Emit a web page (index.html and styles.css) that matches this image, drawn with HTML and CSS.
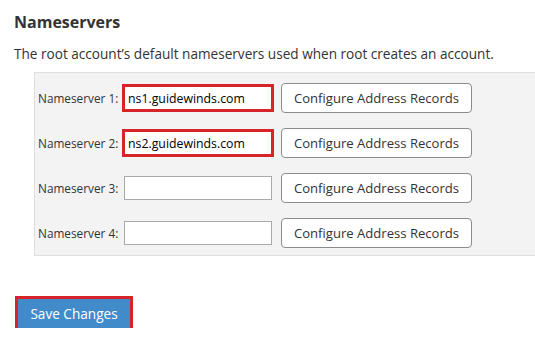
FILE: index.html
```html
<!DOCTYPE html>
<html lang="en">
<head>
    <meta charset="UTF-8">
    <meta name="viewport" content="width=device-width, initial-scale=1.0">
    <title>Nameservers</title>
    <link rel="stylesheet" href="styles.css">
</head>
<body>
    <h2>Nameservers</h2>
    <p class="intro">The root account’s default nameservers used when root creates an account.</p>

    <div class="panel">
        <div class="row">
            <label for="ns1">Nameserver 1:</label>
            <input id="ns1" class="marked" type="text" value="ns1.guidewinds.com">
            <button class="btn">Configure Address Records</button>
        </div>
        <div class="row">
            <label for="ns2">Nameserver 2:</label>
            <input id="ns2" class="marked" type="text" value="ns2.guidewinds.com">
            <button class="btn">Configure Address Records</button>
        </div>
        <div class="row">
            <label for="ns3">Nameserver 3:</label>
            <input id="ns3" type="text" value="">
            <button class="btn">Configure Address Records</button>
        </div>
        <div class="row">
            <label for="ns4">Nameserver 4:</label>
            <input id="ns4" type="text" value="">
            <button class="btn">Configure Address Records</button>
        </div>
    </div>

    <div class="actions">
        <button class="save">Save Changes</button>
    </div>
</body>
</html>
```

FILE: styles.css
```css
html {
    overflow: hidden;
}

body {
    font-family: 'Open Sans', 'Segoe UI', sans-serif;
    color: #333;
    background-color: #fff;
    margin: 0;
    padding: 0 0 0 14px;
}

h2 {
    font-size: 16px;
    font-weight: bold;
    margin: 10px 0 0;
    line-height: 24px;
}

.intro {
    font-size: 13.6px;
    margin: 10px 0 0;
    line-height: 20px;
}

.panel {
    background-color: #f3f3f3;
    border: 1px solid #dedede;
    margin: 8px -4px 0 20px;
    padding: 10px 0 7px 3px;
}

.row {
    display: flex;
    align-items: center;
    height: 30px;
    margin-bottom: 15px;
}

.row:last-child {
    margin-bottom: 0;
}

.row label {
    flex: none;
    font-size: 11.8px;
    width: 86px;
}

.row input {
    flex: none;
    width: 148px;
    height: 24px;
    box-sizing: border-box;
    border: 1px solid #a9a9a9;
    padding: 0 3px;
    font-family: 'Open Sans', sans-serif;
    font-size: 12.3px;
    color: #000;
    background: #fff;
}

.row input.marked {
    outline: 3px solid #d7242a;
    outline-offset: -1px;
}

.btn {
    flex: none;
    margin-left: 9px;
    width: 191px;
    height: 30px;
    background-color: #fff;
    border: 1px solid #8c8c8c;
    border-radius: 4px;
    font-family: 'Open Sans', sans-serif;
    font-size: 13.1px;
    color: #333;
    padding: 0;
}

.actions {
    margin-top: 43px;
}

.save {
    background-color: #428bca;
    color: #fff;
    border: none;
    outline: 3px solid #d7242a;
    width: 112px;
    height: 29px;
    font-family: 'Open Sans', sans-serif;
    font-size: 13.6px;
    margin-left: 4px;
    padding: 0;
}
```
